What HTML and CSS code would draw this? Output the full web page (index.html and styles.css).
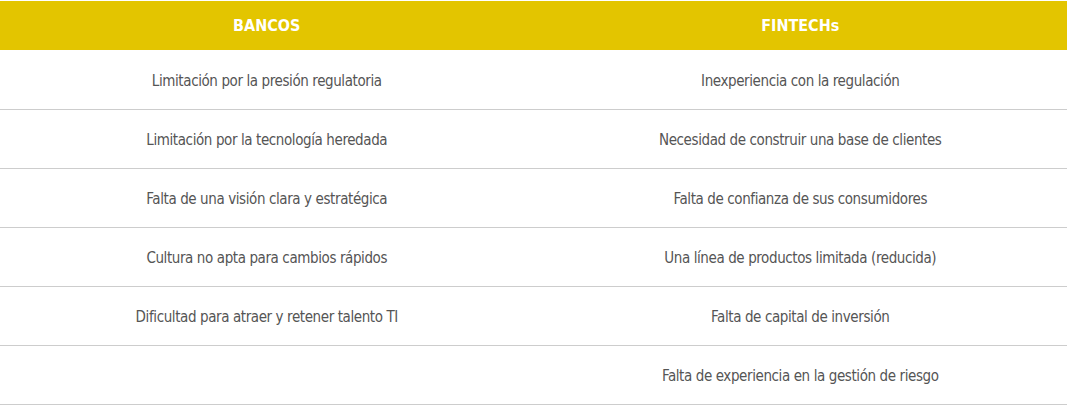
FILE: index.html
```html
<!DOCTYPE html>
<html lang="es">
<head>
<meta charset="utf-8">
<link rel="stylesheet" href="styles.css">
</head>
<body>
<table class="compare">
  <thead>
    <tr><th>BANCOS</th><th>FINTECHs</th></tr>
  </thead>
  <tbody>
    <tr><td>Limitación por la presión regulatoria</td><td>Inexperiencia con la regulación</td></tr>
    <tr><td>Limitación por la tecnología heredada</td><td>Necesidad de construir una base de clientes</td></tr>
    <tr><td>Falta de una visión clara y estratégica</td><td>Falta de confianza de sus consumidores</td></tr>
    <tr><td>Cultura no apta para cambios rápidos</td><td>Una línea de productos limitada (reducida)</td></tr>
    <tr><td>Dificultad para atraer y retener talento TI</td><td>Falta de capital de inversión</td></tr>
    <tr><td></td><td>Falta de experiencia en la gestión de riesgo</td></tr>
  </tbody>
</table>
</body>
</html>
```
FILE: styles.css
```css
html, body {
  margin: 0;
  padding: 0;
  background: #ffffff;
}
.compare {
  width: 1067px;
  margin-top: 1px;
  border-collapse: collapse;
  table-layout: fixed;
  font-family: "Liberation Sans Narrow", "DejaVu Sans Condensed", "Liberation Sans", sans-serif;
  font-stretch: condensed;
}
.compare th {
  background: #e3c500;
  color: #ffffff;
  font-weight: bold;
  font-size: 16px;
  height: 49px;
  padding: 0;
  text-align: center;
  vertical-align: middle;
}
.compare td {
  height: 56px;
  padding: 2px 0 0;
  text-align: center;
  vertical-align: middle;
  font-size: 15px;
  letter-spacing: -0.4px;
  color: #555555;
  border-bottom: 1px solid #cdcdcd;
}
.compare tbody tr:first-child td {
  height: 57px;
}
```
